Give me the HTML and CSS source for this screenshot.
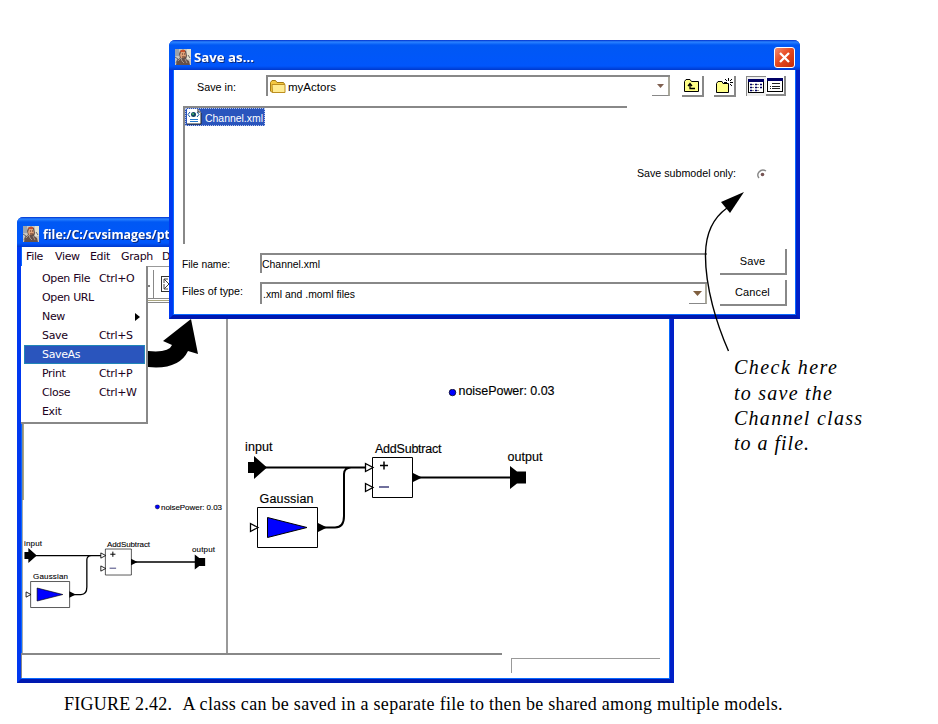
FILE: index.html
```
<!DOCTYPE html>
<html lang="en">
<head>
<meta charset="utf-8">
<title>Figure 2.42</title>
<link rel="stylesheet" href="styles.css">
</head>
<body>
<svg class="defs" aria-hidden="true">
  <defs>
    <symbol id="portrait" viewBox="0 0 16 16">
      <rect width="16" height="16" fill="#c9c5c0"/>
      <rect x="12" width="4" height="10" fill="#e4dfcd"/><rect width="4" height="7" fill="#9aa2ae"/>
      <path d="M5 2Q8-1 11 2L12 7 11 10 14 12 15 16H1L2 11 5 9 4 5Z" fill="#65504a"/>
      <path d="M6 3H10L11 7 9 9H6L5 6Z" fill="#dda078"/>
      <path d="M6 1H10V3H5Z" fill="#c8502c"/>
      <path d="M7 5H8M9 5H10M7 8H10" stroke="#562f25"/>
      <path d="M3 12L6 9 7 12 9 14M10 10L12 14" stroke="#a5948a" fill="none"/>
      <path d="M0 8L3 10 1 14M13 6L15 9" stroke="#6c6669" fill="none"/>
    </symbol>
    <symbol id="wires" viewBox="0 0 310 165">
      <g fill="none" stroke="#000" stroke-width="2">
        <path d="M19 78.500H122M168 88.500H266M76 138.500H90Q99 138.500 99 127V85Q99 79 106 78.500"/>
      </g>
      <path d="M3 73H9V67L22 78.500 9 90V84H3ZM265 77L272 82.500H281V94.500H272L265 100Z"/>
      <path d="M127.500 68.500H167.500V108.500H127.500ZM12.500 118.500H72.500V158.500H12.500Z" fill="#fff" stroke="#000"/>
      <path d="M167 83.500L177 88.500 167 93.500ZM72 133.500L82 138.500 72 143.500Z"/>
      <path d="M120.500 74.500L128 78.500 120.500 82.500ZM120.500 94.500L128 98.500 120.500 102.500ZM5.500 134.500L13 138.500 5.500 142.500Z" fill="#fff" stroke="#000" stroke-width="1.300"/>
      <path d="M22.500 128.500L62 138.500 22.500 148.500Z" fill="#00f" stroke="#000"/>
      <path d="M135 76.500H143M139 72.500V80.500" stroke="#000" stroke-width="1.500"/>
      <path d="M134 98H144" stroke="#226" stroke-width="1.300"/>
      <circle cx="207.500" cy="3.500" r="3.300" fill="#00f" stroke="#000" stroke-width=".7"/>
    </symbol>
  </defs>
</svg>
<main class="figure">
  <section class="window editor">
    <header class="titlebar"><svg class="portrait"><use href="#portrait"/></svg><h1><svg class="title" width="127" height="20"><text x="1" y="15" textLength="127" lengthAdjust="spacingAndGlyphs">file:/C:/cvsimages/pt</text></svg></h1></header>
    <nav class="menubar"><span class="m-file">File</span><span class="m-view">View</span><span class="m-edit">Edit</span><span class="m-graph">Graph</span><span>D</span></nav>
    <div class="toolbar">
      <svg width="24" height="37" viewBox="0 0 24 37"><path d="M0 .5H24" stroke="#999"/><path d="M6.500 4V32" stroke="#888"/><path d="M1 20H3" stroke="#000" stroke-width="1"/><rect x="14.500" y="10.500" width="16" height="15" fill="#fff" stroke="#333"/><path d="M17 17V13H21M17 13L22 18M17 18V23H21M17 23L22 18" fill="none" stroke="#444"/><path d="M0 32.500H24" stroke="#888"/><path d="M0 34.500H24" stroke="#aaa680"/><path d="M0 36.500H24" stroke="#888"/></svg>
    </div>
    <div class="panes">
      <div class="overview">
        <svg width="204" height="349" viewBox="22 304 204 349">
          <path d="M22.500 304V500" stroke="#888"/><path d="M23.500 304V500" stroke="#aaa680"/><path d="M22.500 500V653" stroke="#aaa"/>
          <use href="#wires" x="0" y="0" width="201.500" height="107.250" transform="translate(22.500 504.500)"/>
          <g class="small-label">
            <text x="161" y="510" textLength="61">noisePower: 0.03</text><text x="24" y="546" textLength="18">input</text>
            <text x="107" y="547" textLength="43">AddSubtract</text><text x="192" y="552" textLength="23">output</text>
            <text x="33" y="579" textLength="35">Gaussian</text>
          </g>
        </svg>
      </div>
      <div class="canvas">
        <svg width="442" height="349" viewBox="228 304 442 349">
          <use href="#wires" x="245" y="389" width="310" height="165"/>
          <g class="label">
            <text x="458.500" y="395" textLength="96">noisePower: 0.03</text><text x="245" y="451" textLength="27.500">input</text>
            <text x="375" y="453" textLength="66.500">AddSubtract</text><text x="507.500" y="461" textLength="35">output</text>
            <text x="259.500" y="503" textLength="54">Gaussian</text>
          </g>
        </svg>
      </div>
    </div>
    <footer class="statusbar"><div class="status"></div><div class="progress"></div></footer>
  </section>

  <ul class="popup">
    <li><span>Open File</span><kbd>Ctrl+O</kbd></li>
    <li><span>Open URL</span></li>
    <li><span>New</span><svg class="more" width="5" height="8"><path d="M0 0L5 4 0 8Z"/></svg></li>
    <li><span>Save</span><kbd>Ctrl+S</kbd></li>
    <li class="selected"><span>SaveAs</span></li>
    <li><span>Print</span><kbd>Ctrl+P</kbd></li>
    <li><span>Close</span><kbd>Ctrl+W</kbd></li>
    <li><span>Exit</span></li>
  </ul>

  <section class="window dialog">
    <header class="titlebar"><svg class="portrait"><use href="#portrait"/></svg><h2><svg class="title" width="60" height="20"><text x="0" y="15" textLength="60" lengthAdjust="spacingAndGlyphs">Save as...</text></svg></h2>
      <button class="close" aria-label="Close"><svg width="17" height="17"><path d="M4 4L13 13M13 4L4 13" stroke="#fff" stroke-width="2.300"/></svg></button>
    </header>
    <div class="lookup">
      <label><svg class="fit" width="39" height="16"><text x="0" y="12" textLength="39" lengthAdjust="spacingAndGlyphs">Save in:</text></svg></label>
      <div class="combo place">
        <svg width="18" height="16" viewBox="0 0 18 16"><path d="M1.500 3.500L3 1.500H6.500L8 3.500H14.500L15.500 5V13.500H3L1.500 12Z" fill="#f4c842" stroke="#a47b14"/><path d="M3 5.500H16V13.500H3.500Z" fill="#ffeb91" stroke="#bd8e20"/></svg>
        <svg class="fit" width="50" height="16"><text x="0" y="12" textLength="48" lengthAdjust="spacingAndGlyphs">myActors</text></svg>
        <span class="drop"><svg width="7" height="4"><path d="M0 0H7L3.500 4Z" fill="#806050"/></svg></span>
      </div>
      <button class="tool up"><svg width="16" height="14"><path d="M.5 12.500V2.500L2 .5H6L7.500 2.500H14.500V12.500Z" fill="#ff8" stroke="#000"/><path d="M4 7L6 4.500 8 7M6 5V9.500H11" fill="none" stroke="#000" stroke-width="1.300"/></svg></button>
      <button class="tool new"><svg width="17" height="16"><path d="M.5 14.500V5.500L2 3.500H6L7 5.500H12.500V14.500Z" fill="#ff8" stroke="#000"/><path d="M12.500 0V3M12.500 6V9M8 4.500H11M14 4.500H17M9 1L11 3M16 1L14 3M14 6L16 8" stroke="#000"/></svg></button>
      <button class="tool list"><svg width="17" height="15"><rect x=".5" y=".5" width="15" height="13" fill="#fff" stroke="#000"/><path d="M0 1.500H16" stroke="#006" stroke-width="3"/><path d="M2 5.500H4M7 5.500H9M12 5.500H14M2 8.500H4M7 8.500H9M12 8.500H14M2 11.500H4M7 11.500H9" stroke="#006" stroke-width="1.500"/><path d="M4 5.500H6M9 5.500H11M4 8.500H6M9 8.500H11M4 11.500H6M9 11.500H11" stroke="#888"/></svg></button>
      <button class="tool details"><svg width="16" height="15"><rect x=".5" y=".5" width="15" height="13" fill="#fff" stroke="#000"/><path d="M0 1.500H16" stroke="#006" stroke-width="3"/><path d="M5 5.500H13M3 8.500H4M5 8.500H13M3 10.500H4M5 10.500H13" stroke="#222"/></svg></button>
    </div>
    <div class="browse">
      <div class="files">
        <div class="file"><svg width="16" height="16"><path d="M1 0H12L15 3V15H1Z" fill="#fff"/><path d="M12 0V3H15M15 4V15H1" fill="none" stroke="#222"/><path d="M4 3L2 5.500 4 8M11 3L13 5.500 11 8" fill="none" stroke="#159"/><circle cx="7.500" cy="5.500" r="2.500" fill="#146"/><circle cx="7" cy="5" r="1" fill="#4b6"/><path d="M4 10.500H12M4 12.500H12" stroke="#27c"/></svg><svg class="fit" width="58" height="16"><text x="0" y="13" textLength="58" lengthAdjust="spacingAndGlyphs">Channel.xml</text></svg></div>
      </div>
      <div class="option"><svg class="fit" width="100" height="16"><text x="0" y="12" textLength="99" lengthAdjust="spacingAndGlyphs">Save submodel only:</text></svg><svg class="radio" width="11" height="11"><path d="M2 9Q-.5 6 2 3Q5-.5 9 2" fill="none" stroke="#888" stroke-width="1.400"/><circle cx="5.500" cy="5.500" r="1.800" fill="#755"/></svg></div>
    </div>
    <form class="entry" onsubmit="return false">
      <label><svg class="fit" width="49" height="16"><text x="0" y="12" textLength="48" lengthAdjust="spacingAndGlyphs">File name:</text></svg></label>
      <div class="combo name"><svg class="fit" width="62" height="16"><text x="0" y="12" textLength="58" lengthAdjust="spacingAndGlyphs">Channel.xml</text></svg></div>
      <button class="push" type="button">Save</button>
      <label class="types"><svg class="fit" width="62" height="16"><text x="0" y="12" textLength="61" lengthAdjust="spacingAndGlyphs">Files of type:</text></svg></label>
      <div class="combo type"><svg class="fit" width="94" height="16"><text x="0" y="12" textLength="92" lengthAdjust="spacingAndGlyphs">.xml and .moml files</text></svg><span class="drop"><svg width="9" height="5"><path d="M0 0H9L4.500 5Z" fill="#806040"/></svg></span></div>
      <button class="push" type="button">Cancel</button>
    </form>
  </section>

  <svg class="pointers" width="938" height="724" viewBox="0 0 938 724">
    <path d="M148 351Q169 353 172 345L163 341 191 319 198 354 188 351Q179 370 148 367Z"/>
    <path d="M728.500 351C717 325 705 287 705.500 254Q706 223 727 208" fill="none" stroke="#000" stroke-width="1.400"/>
    <path d="M744 192L721 202 730 213Z"/>
  </svg>
  <svg class="note" width="140" height="104">
    <text x="0" y="18" textLength="103">Check here</text><text x="0" y="44" textLength="98">to save the</text>
    <text x="0" y="69" textLength="128">Channel class</text><text x="0" y="94" textLength="75">to a file.</text>
  </svg>
  <svg class="caption" width="730" height="24"><text x="0" y="17" textLength="108">FIGURE 2.42.</text><text x="118.500" y="17" textLength="600">A class can be saved in a separate file to then be shared among multiple models.</text></svg>
</main>
</body>
</html>
```
FILE: styles.css
```
* { box-sizing: border-box; }
body { margin: 0; background: #fff; color: #000; font: 11px "Liberation Sans", sans-serif; }
svg { display: block; flex: none; }
button { border: 0; padding: 0; margin: 0; background: #fff; color: #000; font: inherit; }
.defs { position: absolute; width: 0; height: 0; }
.figure { position: relative; width: 938px; height: 724px; overflow: hidden; }

.window { position: absolute; display: flex; flex-direction: column; background: #fff; border: solid; border-width: 0 4px 4px; border-color: #0048f0 #0020c8 #0018b0 #0038f0; border-radius: 6px 6px 0 0; box-shadow: inset 1px 0 #0868ff, inset -1px -1px #0868ff; }
.editor { left: 17px; top: 217px; width: 657px; height: 466px; }
.dialog { left: 169px; top: 40px; width: 631px; height: 279px; }
.titlebar { display: flex; align-items: center; flex: none; height: 30px; margin: 0 -4px; padding: 4px 5px 0 6px; border-radius: 6px 6px 0 0; background: linear-gradient(#0030cc 0, #2a83ff 2px, #0058f4 5px, #0056fc 26px, #0038cc 30px); color: #fff; }
.portrait { width: 16px; height: 16px; }
.titlebar h1, .titlebar h2 { margin: 0 0 0 3px; font: bold 13px "Open Sans", sans-serif; }
.title { fill: #fff; overflow: visible; filter: drop-shadow(1px 1px 0 #0c2c80); }
.close { display: flex; align-items: center; justify-content: center; width: 21px; height: 21px; margin-left: auto; border: 1px solid #fff; border-radius: 3px; background: linear-gradient(135deg, #f38c70, #e74b22 45%, #c32b08); }

.menubar, .popup { font: 11px "DejaVu Sans", sans-serif; letter-spacing: -.35px; color: #200020; }
.menubar { display: flex; height: 19px; padding: 3px 0 0 5px; line-height: 13px; }
.menubar .m-file { width: 29px; }
.menubar .m-view { width: 35px; }
.menubar .m-edit { width: 31px; }
.menubar .m-graph { width: 41px; }
.toolbar { height: 38px; padding-left: 126px; }
.panes { display: flex; height: 349px; padding-left: 1px; }
.overview { width: 204px; overflow: hidden; }
.canvas { flex: 1; border-left: 2px solid #999; overflow: hidden; }
.label { font-size: 12.500px; stroke: #000; stroke-width: .15px; }
.small-label { font-size: 8px; stroke: #000; stroke-width: .1px; }
.statusbar { display: flex; flex: 1; }
.status { width: 481px; height: 25px; border-top: 2px solid #888; border-left: 1px solid #888; }
.progress { width: 149px; height: 15px; margin: 5px 0 0 9px; border-top: 1px solid #999; border-left: 1px solid #999; }

.popup { position: absolute; left: 21px; top: 266px; width: 127px; height: 158px; margin: 0; padding: 3px 1px 0 3px; list-style: none; background: #fff; border-right: 2px solid #888; border-bottom: 2px solid #888; }
.popup li { display: flex; align-items: center; height: 19px; padding-left: 18px; }
.popup li span { width: 57px; white-space: nowrap; }
.popup kbd { font: inherit; }
.popup .more { margin-left: 36px; }
.popup .selected { background: #2a55bd; color: #fff; border: 1px solid #2085b8; padding-left: 17px; }

.fit { overflow: visible; font: 11px "Liberation Sans", sans-serif; }
.lookup { display: flex; height: 36px; padding: 5px 0 0 24px; }
.lookup label { width: 69px; padding-top: 4px; }
.combo { display: flex; align-items: center; position: relative; border-top: 2px solid #888; border-left: 2px solid #888; }
.place { width: 404px; height: 21px; padding-left: 1px; }
.place .fit { margin-left: 1px; }
.drop { display: flex; align-items: center; justify-content: center; width: 18px; align-self: stretch; margin-left: auto; border-right: 2px solid #aaa89b; border-bottom: 1px solid #888; }
.tool { display: flex; align-items: center; justify-content: center; width: 22px; height: 21px; margin-top: 1px; border-right: 2px solid #888; border-bottom: 2px solid #888; }
.tool.up { margin-left: 12px; }
.tool.new { margin-left: 10px; }
.tool.list { width: 20px; height: 20px; margin-left: 10px; border: 0; border-top: 1px solid #888; border-left: 1px solid #888; background: #eee; }
.tool.details { width: 20px; height: 20px; }
.browse { display: flex; height: 139px; padding-left: 10px; }
.files { width: 444px; height: 138px; border-top: 2px solid #888; border-left: 2px solid #888; }
.file { display: flex; align-items: center; gap: 3px; width: 80px; height: 18px; background: #2a55bd; fill: #fff; border: 1px dotted #b8c6ed; }
.option { display: flex; align-items: center; align-self: flex-start; height: 16px; margin: 59px 0 0 10px; }
.radio { margin: 2px 0 0 20px; }
.entry { display: grid; grid-template-columns: 78px 447px 67px; column-gap: 0; padding: 4px 0 0 9px; margin: 0; }
.entry label { padding-top: 7px; }
.entry .types { padding-top: 3px; }
.name, .type { width: 447px; height: 20px; margin-top: 4px; }
.type { height: 22px; margin-top: 2px; padding-left: 1px; }
.push { width: 67px; height: 26px; margin: 0 0 5px 13px; border-right: 2px solid #888; border-bottom: 2px solid #888; font-size: 11px; letter-spacing: .1px; }

.pointers { position: absolute; left: 0; top: 0; pointer-events: none; }
.note { position: absolute; left: 734px; top: 356px; font: italic 20px "Liberation Serif", serif; overflow: visible; }
.caption { position: absolute; left: 64px; top: 693px; font: 18px "Liberation Serif", serif; overflow: visible; }
```
